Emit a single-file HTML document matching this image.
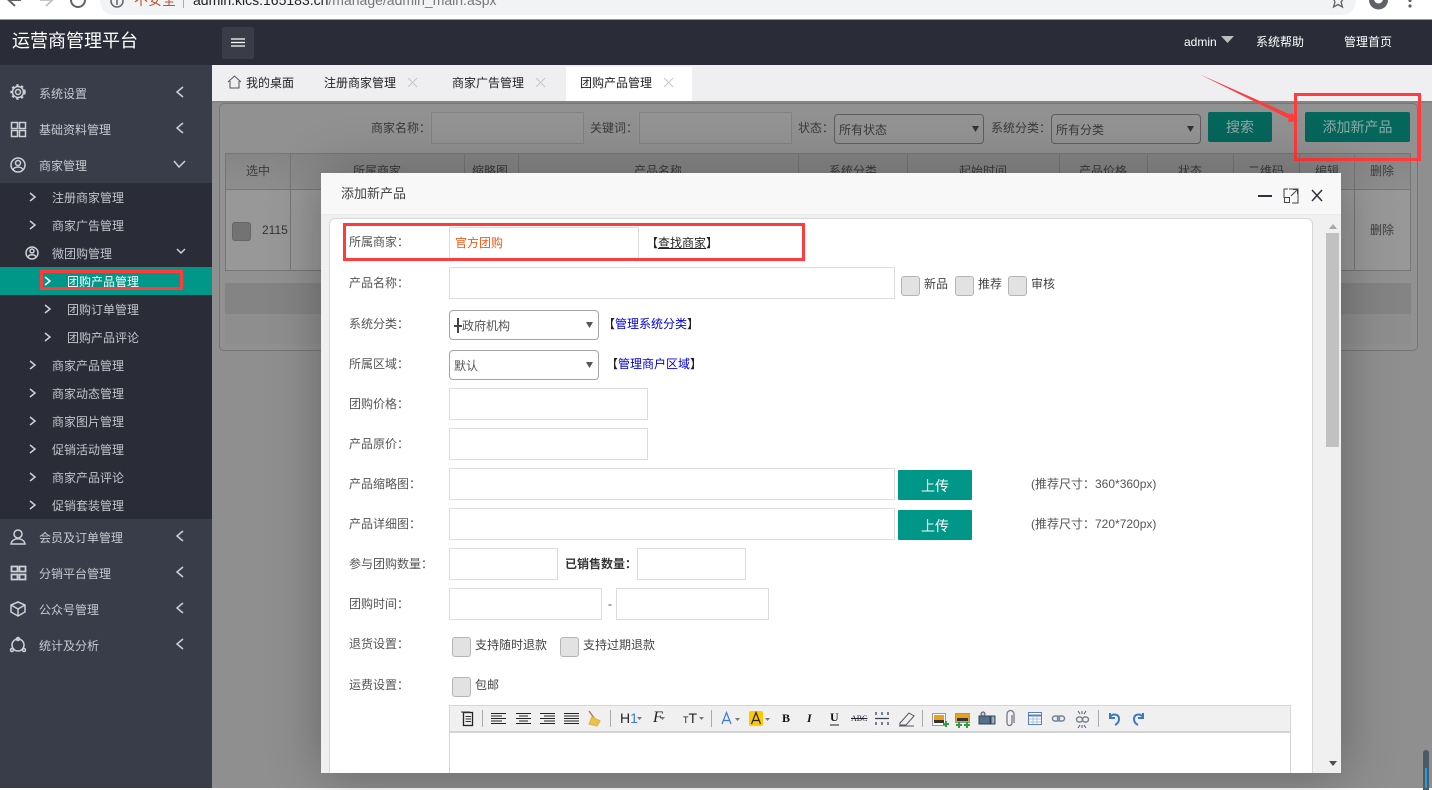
<!DOCTYPE html>
<html lang="zh"><head><meta charset="utf-8"><title>运营商管理平台</title>
<style>
html,body{margin:0;padding:0}
body{width:1432px;height:788px;overflow:hidden;position:relative;background:#fff;font:12px/16px "Liberation Sans","Noto Sans CJK SC",sans-serif;color:#444}
div,span,svg{position:absolute;box-sizing:border-box}
.t{white-space:nowrap}
.m{color:#c8cad1;left:39px}
.s{color:#c3c5cc;left:52px}
.th{color:#3c3c3c;white-space:nowrap;text-align:center;top:163px}
.v{background:#767676;width:1px;top:153px;height:118px}
.l{left:349px;color:#555;white-space:nowrap}
.i{background:#fff;border:1px solid #dcdcdc}
.sel{background:#fff;border:1px solid #a5a5a5;border-radius:4px}
.ck{width:19px;height:20px;background:#e2e2e2;border:1px solid #b5b5b5;border-radius:3px}
.btn{background:#009688;color:#fff;width:74px;height:30px;text-align:center;line-height:32px;font-size:14px;left:898px;border-radius:1px}
.sep{width:1px;height:17px;top:710px;background:#aaa}
.r{border:3px solid #ff3b3b}
</style></head><body>

<!-- browser chrome -->
<div style="left:0;top:0;width:1432px;height:19px;background:#fff"></div>
<div style="left:100px;top:-12px;width:1256px;height:27px;border-radius:14px;background:#f1f3f4"></div>
<svg style="left:0;top:0" width="1432" height="20" viewBox="0 0 1432 20" fill="none">
<path d="M21 0H9M15 -6L8.500 0L15 6" stroke="#5f6368" stroke-width="2"/>
<path d="M40 0H52M46 -6L52.500 0L46 6" stroke="#c4c7ca" stroke-width="2"/>
<path d="M85 0A7 7 0 0 1 71 0" stroke="#5f6368" stroke-width="2"/>
<circle cx="117" cy="1" r="6" stroke="#5f6368" stroke-width="1.500"/><path d="M117 0V5" stroke="#5f6368" stroke-width="1.500"/>
<path d="M1333 -2L1336.500 -2L1338 -7L1339.500 -2L1344 -2L1341 2L1342.500 7L1338 4.500L1333.500 7L1335 2Z" stroke="#5f6368" stroke-width="1.300"/>
<circle cx="1378.500" cy="0" r="9.500" fill="#5f6368"/><circle cx="1378.500" cy="-1" r="4.500" fill="#fff"/>
<circle cx="1410" cy="0.500" r="1.600" fill="#5f6368"/><circle cx="1410" cy="6" r="1.600" fill="#5f6368"/>
</svg>
<div class="t" style="left:134px;top:-8px;color:#c5522f;font-size:14px">不安全</div>
<div style="left:183px;top:-6px;width:1px;height:14px;background:#aaa"></div>
<div class="t" style="left:193px;top:-8px;font-size:14px;color:#222">admin.kics.165183.cn<span style="position:static;color:#777">/manage/admin_main.aspx</span></div>
<div style="left:0;top:19px;width:1432px;height:1px;background:#9a9a9a"></div>

<!-- header -->
<div style="left:0;top:20px;width:1432px;height:45px;background:#2a2d37"></div>
<div class="t" style="left:12px;top:29px;font-size:18px;line-height:24px;color:#fff">运营商管理平台</div>
<div style="left:222px;top:27px;width:32px;height:32px;background:#3a3d48;border-radius:2px"></div>
<svg style="left:230px;top:37px" width="16" height="12" viewBox="0 0 16 12"><path d="M1 2H15M1 5.500H15M1 9H15" stroke="#fff" stroke-width="1.200"/></svg>
<div class="t" style="left:1184px;top:34px;color:#fff">admin</div>
<svg style="left:1221px;top:36px" width="13" height="8"><path d="M0 0H13L6.500 7Z" fill="#bdbdbd"/></svg>
<div class="t" style="left:1256px;top:34px;color:#fff">系统帮助</div>
<div class="t" style="left:1344px;top:34px;color:#fff">管理首页</div>

<!-- sidebar -->
<div style="left:0;top:65px;width:212px;height:723px;background:#393c49"></div>
<div style="left:0;top:183px;width:212px;height:336px;background:#2a2c37"></div>
<div style="left:0;top:267px;width:212px;height:28px;background:#009688"></div>
<div class="t m" style="top:86px">系统设置</div>
<div class="t m" style="top:122px">基础资料管理</div>
<div class="t m" style="top:158px">商家管理</div>
<div class="t s" style="top:190px">注册商家管理</div>
<div class="t s" style="top:218px">商家广告管理</div>
<div class="t s" style="top:246px">微团购管理</div>
<div class="t" style="left:67px;top:274px;color:#fff">团购产品管理</div>
<div class="t s" style="left:67px;top:302px">团购订单管理</div>
<div class="t s" style="left:67px;top:330px">团购产品评论</div>
<div class="t s" style="top:358px">商家产品管理</div>
<div class="t s" style="top:386px">商家动态管理</div>
<div class="t s" style="top:414px">商家图片管理</div>
<div class="t s" style="top:442px">促销活动管理</div>
<div class="t s" style="top:470px">商家产品评论</div>
<div class="t s" style="top:498px">促销套装管理</div>
<div class="t m" style="top:530px">会员及订单管理</div>
<div class="t m" style="top:566px">分销平台管理</div>
<div class="t m" style="top:602px">公众号管理</div>
<div class="t m" style="top:638px">统计及分析</div>

<svg style="left:0;top:65px" width="212" height="723" viewBox="0 65 212 723" fill="none" stroke="#ced0d6" stroke-width="1.500">
<path d="M183 87L177 92L183 97M183 123L177 128L183 133"/>
<path d="M174 161L179 167L185 161"/>
<path d="M177 249L181 253L185 249"/>
<path d="M183 531L177 536L183 541M183 567L177 572L183 577M183 603L177 608L183 613M183 639L177 644L183 649"/>
<path d="M30 193L35 197L30 201M30 221L35 225L30 229M30 361L35 365L30 369M30 389L35 393L30 397M30 417L35 421L30 425M30 445L35 449L30 453M30 473L35 477L30 481M30 501L35 505L30 509"/>
<path d="M45 305L50 309L45 313M45 333L50 337L45 341"/>
<path d="M45 277L50 281L45 285" stroke="#fff"/>
<circle cx="18" cy="92" r="5.500"/><circle cx="18" cy="92" r="2.500"/><circle cx="18" cy="92" r="6.800" stroke-dasharray="2.500 2.500" stroke-width="1.800"/>
<path d="M11.500 122.500h6v6h-6zM19.500 122.500h6v6h-6zM11.500 130.500h6v6h-6zM19.500 130.500h6v6h-6z"/>
<circle cx="18" cy="165" r="7"/><circle cx="18" cy="163" r="2.500"/><path d="M13 170C14 166 22 166 23 170"/>
<circle cx="32" cy="253" r="6"/><circle cx="32" cy="251" r="2"/><path d="M28 257C29 254 35 254 36 257"/>
<circle cx="18" cy="534" r="4"/><path d="M11 544C12 537 24 537 25 544Z"/>
<path d="M11.500 566.500h6v5h-6zM19.500 566.500h6v5h-6zM11.500 574.500h6v5h-6zM19.500 574.500h6v5h-6z" stroke-width="1.800"/>
<path d="M18 602L25 605V612L18 616L11 612V605ZM11 605L18 609L25 605M18 609V616"/>
<circle cx="18" cy="645" r="6"/><circle cx="18" cy="639" r="1.500"/><circle cx="12" cy="650" r="1.500"/><circle cx="24" cy="650" r="1.500"/>
</svg>

<!-- tabs -->
<div style="left:212px;top:65px;width:1220px;height:36px;background:#efeef1"></div>
<div style="left:566px;top:67px;width:126px;height:35px;background:#fff"></div>
<svg style="left:227px;top:75px" width="15" height="14" viewBox="0 0 15 14" fill="none" stroke="#555"><path d="M1 7L7.500 1L14 7M3 6V13H12V6"/></svg>
<div class="t" style="left:246px;top:75px;color:#222">我的桌面</div>
<div class="t" style="left:324px;top:75px;color:#222">注册商家管理</div>
<div class="t" style="left:452px;top:75px;color:#222">商家广告管理</div>
<div class="t" style="left:580px;top:75px;color:#222">团购产品管理</div>
<svg style="left:0;top:0" width="700" height="100" fill="none" stroke="#c8c8c8"><path d="M408 78L417 87M417 78L408 87M536 78L545 87M545 78L536 87M664 78L673 87M673 78L664 87"/></svg>

<!-- dimmed content -->
<div style="left:212px;top:101px;width:1220px;height:687px;background:#8f8f8f"></div>
<div style="left:212px;top:101px;width:1220px;height:2px;background:#858585"></div>
<div style="left:219px;top:103px;width:1199px;height:248px;border:1px solid #767676;border-radius:5px;background:#919191"></div>
<div class="t" style="left:371px;top:120px;color:#3a3a3a">商家名称：</div>
<div style="left:431px;top:112px;width:153px;height:32px;border:1px solid #828282;background:#939393"></div>
<div class="t" style="left:590px;top:120px;color:#3a3a3a">关键词：</div>
<div style="left:639px;top:112px;width:153px;height:32px;border:1px solid #828282;background:#939393"></div>
<div class="t" style="left:798px;top:120px;color:#3a3a3a">状态：</div>
<div style="left:834px;top:114px;width:150px;height:30px;border:1px solid #5e5e5e;border-radius:4px;background:#939393"></div>
<div class="t" style="left:839px;top:122px;color:#3a3a3a">所有状态</div>
<svg style="left:972px;top:125px" width="8" height="8"><path d="M0 1H7L3.500 7Z" fill="#333"/></svg>
<div class="t" style="left:991px;top:120px;color:#3a3a3a">系统分类：</div>
<div style="left:1051px;top:114px;width:150px;height:30px;border:1px solid #5e5e5e;border-radius:4px;background:#939393"></div>
<div class="t" style="left:1056px;top:122px;color:#3a3a3a">所有分类</div>
<svg style="left:1187px;top:125px" width="8" height="8"><path d="M0 1H7L3.500 7Z" fill="#333"/></svg>
<div style="left:1208px;top:112px;width:64px;height:30px;background:#05665b;color:#8eaba6;text-align:center;line-height:30px;font-size:14px;border-radius:2px">搜索</div>
<div style="left:1305px;top:112px;width:105px;height:30px;background:#05665b;color:#8eaba6;text-align:center;line-height:30px;font-size:14px;border-radius:2px">添加新产品</div>

<!-- table -->
<div style="left:225px;top:153px;width:1186px;height:118px;border:1px solid #767676;background:#989898"></div>
<div style="left:226px;top:154px;width:1184px;height:35px;background:linear-gradient(#858585,#8e8e8e)"></div>
<div style="left:226px;top:189px;width:1184px;height:1px;background:#767676"></div>
<div class="v" style="left:290px"></div><div class="v" style="left:464px"></div><div class="v" style="left:518px"></div><div class="v" style="left:798px"></div><div class="v" style="left:907px"></div><div class="v" style="left:1059px"></div><div class="v" style="left:1147px"></div><div class="v" style="left:1233px"></div><div class="v" style="left:1299px"></div><div class="v" style="left:1354px"></div>
<div class="th" style="left:246px">选中</div><div class="th" style="left:353px">所属商家</div><div class="th" style="left:472px">缩略图</div><div class="th" style="left:634px">产品名称</div><div class="th" style="left:829px">系统分类</div><div class="th" style="left:959px">起始时间</div><div class="th" style="left:1079px">产品价格</div><div class="th" style="left:1178px">状态</div><div class="th" style="left:1248px">二维码</div><div class="th" style="left:1315px">编辑</div><div class="th" style="left:1370px">删除</div>
<div style="left:232px;top:222px;width:19px;height:19px;background:#737373;border:1px solid #666;border-radius:3px"></div>
<div class="t" style="left:262px;top:222px;color:#333">2115</div>
<div class="t" style="left:1370px;top:222px;color:#3c3c3c">删除</div>
<div style="left:225px;top:283px;width:1186px;height:31px;background:#848484"></div>
<div style="left:225px;top:314px;width:1186px;height:30px;background:#8e8e8e"></div>

<!-- arrow + red box -->
<svg style="left:1190px;top:68px" width="120" height="70" viewBox="1190 68 120 70"><path d="M1199 74L1290 114.500L1292 113L1298 121L1288 122L1288.500 118.500Z" fill="#ff3b3b"/></svg>
<div class="r" style="left:1294px;top:93px;width:127px;height:68px"></div>

<!-- modal -->
<div style="left:321px;top:173px;width:1020px;height:600px;background:#f0f0f0;box-shadow:1px 1px 50px rgba(0,0,0,.3)"></div>
<div style="left:321px;top:173px;width:1020px;height:42px;background:#f8f8f8;border-bottom:1px solid #ececec"></div>
<div class="t" style="left:341px;top:186px;font-size:13px;color:#444">添加新产品</div>
<svg style="left:1250px;top:180px" width="80" height="30" viewBox="1250 180 80 30" fill="none" stroke="#2f3240">
<path d="M1258 196H1272" stroke-width="2"/>
<path d="M1289 189H1298V203H1292M1284 198V189H1288M1291 196L1297 190M1293 189.500H1297.500V194" stroke-width="1" stroke="#444"/><rect x="1284.500" y="197.500" width="5" height="5" stroke="#444"/>
<path d="M1312 190L1322 201M1322 190L1312 201" stroke-width="1.500"/>
</svg>
<div style="left:329px;top:218px;width:984px;height:555px;background:#fff;border:1px solid #d8d8d8;border-bottom:0;border-radius:6px 6px 0 0"></div>
<div style="left:1326px;top:233px;width:13px;height:214px;background:#c1c1c1"></div>
<svg style="left:1326px;top:222px" width="14" height="8"><path d="M3 7H11L7 2Z" fill="#a8a8a8"/></svg>
<svg style="left:1326px;top:760px" width="14" height="8"><path d="M3 1H11L7 6Z" fill="#505050"/></svg>

<!-- form -->
<div class="l" style="top:234px">所属商家：</div>
<div class="i" style="left:449px;top:227px;width:190px;height:32px"></div>
<div class="t" style="left:455px;top:235px;color:#f05a14">官方团购</div>
<div class="t" style="left:646px;top:235px;color:#222">【<span style="position:static;text-decoration:underline">查找商家</span>】</div>
<div class="r" style="left:343px;top:223px;width:462px;height:38px"></div>

<div class="l" style="top:275px">产品名称：</div>
<div class="i" style="left:449px;top:267px;width:446px;height:32px"></div>
<div class="ck" style="left:901px;top:276px"></div><div class="t" style="left:924px;top:276px">新品</div>
<div class="ck" style="left:955px;top:276px"></div><div class="t" style="left:978px;top:276px">推荐</div>
<div class="ck" style="left:1008px;top:276px"></div><div class="t" style="left:1031px;top:276px">审核</div>

<div class="l" style="top:316px">系统分类：</div>
<div class="sel" style="left:449px;top:310px;width:150px;height:30px"></div>
<div style="left:454px;top:325px;width:8px;height:2px;background:#444"></div><div style="left:457px;top:318px;width:2px;height:15px;background:#444"></div>
<div class="t" style="left:462px;top:318px;color:#555">政府机构</div>
<svg style="left:585px;top:321px" width="9" height="8"><path d="M1 1H8L4.500 7Z" fill="#555"/></svg>
<div class="t" style="left:603px;top:316px;color:#222">【<span style="position:static;color:#0000e0">管理系统分类</span>】</div>

<div class="l" style="top:356px">所属区域：</div>
<div class="sel" style="left:449px;top:350px;width:150px;height:30px"></div>
<div class="t" style="left:454px;top:358px;color:#555">默认</div>
<svg style="left:585px;top:361px" width="9" height="8"><path d="M1 1H8L4.500 7Z" fill="#555"/></svg>
<div class="t" style="left:606px;top:356px;color:#222">【<span style="position:static;color:#0000e0">管理商户区域</span>】</div>

<div class="l" style="top:396px">团购价格：</div>
<div class="i" style="left:449px;top:388px;width:199px;height:32px"></div>
<div class="l" style="top:436px">产品原价：</div>
<div class="i" style="left:449px;top:428px;width:199px;height:32px"></div>

<div class="l" style="top:476px">产品缩略图：</div>
<div class="i" style="left:449px;top:468px;width:446px;height:32px"></div>
<div class="btn" style="top:470px">上传</div>
<div class="t" style="left:1031px;top:476px;color:#555">(推荐尺寸：360*360px)</div>

<div class="l" style="top:516px">产品详细图：</div>
<div class="i" style="left:449px;top:508px;width:446px;height:32px"></div>
<div class="btn" style="top:510px">上传</div>
<div class="t" style="left:1031px;top:516px;color:#555">(推荐尺寸：720*720px)</div>

<div class="l" style="top:556px">参与团购数量：</div>
<div class="i" style="left:449px;top:548px;width:109px;height:32px"></div>
<div class="t" style="left:565px;top:556px;font-weight:bold;color:#333">已销售数量：</div>
<div class="i" style="left:637px;top:548px;width:109px;height:32px"></div>

<div class="l" style="top:596px">团购时间：</div>
<div class="i" style="left:449px;top:588px;width:153px;height:32px"></div>
<div class="t" style="left:608px;top:596px">-</div>
<div class="i" style="left:616px;top:588px;width:153px;height:32px"></div>

<div class="l" style="top:636px">退货设置：</div>
<div class="ck" style="left:452px;top:637px"></div><div class="t" style="left:475px;top:637px">支持随时退款</div>
<div class="ck" style="left:560px;top:637px"></div><div class="t" style="left:583px;top:637px">支持过期退款</div>

<div class="l" style="top:677px">运费设置：</div>
<div class="ck" style="left:452px;top:677px"></div><div class="t" style="left:475px;top:677px">包邮</div>

<!-- editor -->
<div style="left:449px;top:705px;width:842px;height:68px;border:1px solid #d4d4d4;border-bottom:0;background:#fff"></div>
<div style="left:450px;top:706px;width:840px;height:27px;background:#f0f0f0;border-bottom:2px solid #d4d4d4"></div>
<div class="sep" style="left:482px"></div><div class="sep" style="left:610px"></div><div class="sep" style="left:711px"></div><div class="sep" style="left:922px"></div><div class="sep" style="left:1098px"></div>
<svg style="left:450px;top:706px" width="720" height="26" viewBox="450 706 720 26" fill="none" stroke="#222">
<rect x="463.500" y="712.500" width="9" height="13" fill="#eee" stroke="#222" stroke-width="1.300"/><path d="M461 712H470M465.500 716.500H471M465.500 719H471M465.500 721.500H471" stroke="#333"/>
<path d="M491 713.500H506M491 716H502M491 718.500H506M491 721H502M491 723.500H506"/>
<path d="M516 713.500H531M519 716H528M516 718.500H531M519 721H528M516 723.500H531"/>
<path d="M540 713.500H555M544 716H555M540 718.500H555M544 721H555M540 723.500H555"/>
<path d="M564 713.500H579M564 716H579M564 718.500H579M564 721H579M564 723.500H579"/>
<path d="M589 711L594 718" stroke="#c9752c" stroke-width="1.500"/><path d="M592 717L600 721L597 726L589 724Z" fill="#ecc24a" stroke="#d9b24c"/>
<path d="M637 717L642 717L639.500 720Z M660 717L665 717L662.500 720Z M699 717L704 717L701.500 720Z M735 718L740 718L737.500 721Z M765 718L770 718L767.500 721Z" fill="#777" stroke="none"/>
<rect x="749" y="711" width="14" height="15" rx="2" fill="#ffc800" stroke="none"/>
<path d="M722 724L726.500 712.500L731 724M723.500 720.500H729.500" stroke="#3c78d8" stroke-width="1.200"/>
<path d="M751.500 724L756 712.500L760.500 724M753 720.500H759" stroke="#222" stroke-width="1.200"/>
<path d="M830 725H839"/>
<path d="M876 712V715M882 712V715M888 712V715M875 718.500H889M876 722V725M882 722V725M888 722V725" stroke="#345" stroke-width="1.300"/>
<path d="M900 723L909 713L914 716L906 725H900ZM899 726H914" stroke="#556"/>
<rect x="932.500" y="713.500" width="13" height="12" fill="#fff" stroke="#999"/><rect x="934" y="715" width="10" height="8" fill="#e8a020" stroke="none"/><rect x="934" y="720" width="10" height="3" fill="#333" stroke="none"/>
<path d="M943 724H949M946 721V727" stroke="#2e9e3e" stroke-width="2"/>
<rect x="955.500" y="713.500" width="14" height="9" fill="#e8a020" stroke="#999"/><rect x="957" y="718" width="11" height="3" fill="#333" stroke="none"/>
<path d="M956 725H962M959 722V728M964 725H970M967 722V728" stroke="#2e9e3e" stroke-width="2"/>
<rect x="979" y="716" width="11" height="8" fill="#56708c" stroke="#345"/><rect x="991" y="716" width="4" height="8" fill="#9ab" stroke="#345"/><circle cx="983" cy="714" r="2" fill="#ccd" stroke="#456"/>
<path d="M1012 715V723A2.500 2.500 0 0 1 1007 723V714A3.500 3.500 0 0 1 1014 714V723" stroke="#778" stroke-width="1.300"/>
<rect x="1028.500" y="712.500" width="13" height="12" fill="#fff" stroke="#5b7fb5"/><path d="M1029 715.500H1041" stroke="#5b7fb5" stroke-width="2"/><path d="M1029 719H1041M1029 722H1041M1033 716V724M1037 716V724" stroke="#a9bedc"/>
<rect x="1052.500" y="716" width="7" height="5" rx="2.500" stroke="#6f8396" stroke-width="1.500"/><rect x="1057.500" y="716" width="7" height="5" rx="2.500" stroke="#6f8396" stroke-width="1.500"/>
<rect x="1076.500" y="717" width="6" height="5" rx="2.500" stroke="#6f8396" stroke-width="1.500"/><rect x="1082.500" y="717" width="6" height="5" rx="2.500" stroke="#6f8396" stroke-width="1.500"/>
<path d="M1078 711L1080 714M1086 711L1084 714M1082 711V714M1078 728L1080 725M1086 728L1084 725M1082 728V725" stroke="#556"/>
<path d="M1110 713V718H1115M1110 717C1113 713 1119 714 1119 719C1119 722 1117 724 1115 725" stroke="#3c78c8" stroke-width="2"/>
<path d="M1143 713V718H1138M1143 717C1140 713 1134 714 1134 719C1134 722 1136 724 1138 725" stroke="#3c78c8" stroke-width="2"/>
</svg>
<div class="t" style="left:620px;top:710px;font-size:14px;color:#222">H<span style="position:static;color:#3c78d8">1</span></div>
<div class="t" style="left:653px;top:709px;font:italic 16px/18px 'Liberation Serif',serif;color:#222">F</div>
<div class="t" style="left:683px;top:710px;font-size:14px;color:#222"><span style="position:static;font-size:9px">T</span>T</div>
<div class="t" style="left:782px;top:711px;font:bold 12px/15px 'Liberation Serif',serif;color:#111">B</div>
<div class="t" style="left:807px;top:711px;font:italic bold 12px/15px 'Liberation Serif',serif;color:#111">I</div>
<div class="t" style="left:830px;top:710px;font:bold 12px/15px 'Liberation Serif',serif;color:#111">U</div>
<div class="t" style="left:851px;top:713px;font:8px/12px 'Liberation Serif',serif;color:#223;text-decoration:line-through">ABC</div>

<!-- bottom-right widget -->
<div style="left:1423px;top:750px;width:6px;height:40px;background:#4a5a66;border-radius:3px 3px 0 0"></div>
<div style="left:1425px;top:768px;width:2px;height:20px;background:#2a9fd6"></div>

<!-- sidebar active red box -->
<div class="r" style="left:40px;top:270px;width:143px;height:20px"></div>
</body></html>
